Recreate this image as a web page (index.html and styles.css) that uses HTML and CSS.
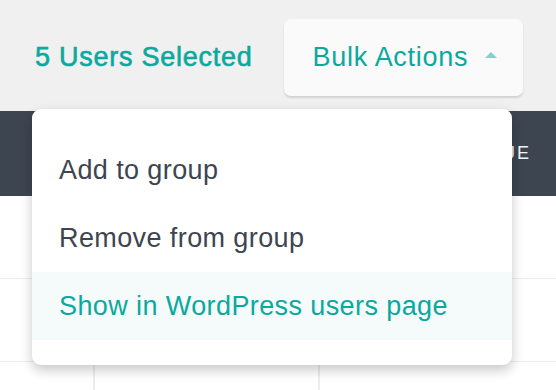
FILE: index.html
```html
<!DOCTYPE html>
<html>
<head>
<meta charset="utf-8">
<link rel="stylesheet" href="styles.css">
</head>
<body>
<div class="page">
  <div class="toolbar">
    <span class="count">5 Users Selected</span>
    <button class="bulk">
      <span>Bulk Actions</span>
      <svg class="caret" width="12" height="6" viewBox="0 0 12 6"><path d="M0 6 L6 0 L12 6 Z" fill="#80d3cd"/></svg>
    </button>
  </div>
  <div class="table">
    <div class="thead">
      <span class="th">VALUE</span>
    </div>
    <div class="row"></div>
    <div class="row"></div>
    <div class="row last">
      <div class="cell c1"></div>
      <div class="cell c2"></div>
      <div class="cell c3"></div>
    </div>
  </div>
  <ul class="menu">
    <li class="item">Add to group</li>
    <li class="item">Remove from group</li>
    <li class="item active">Show in WordPress users page</li>
  </ul>
</div>
</body>
</html>
```

FILE: styles.css
```css
html, body {
  margin: 0;
  padding: 0;
  background: #ffffff;
}
body {
  width: 556px;
  height: 390px;
  overflow: hidden;
  font-family: "Liberation Sans", Arial, sans-serif;
}
.page {
  position: relative;
  width: 556px;
  height: 390px;
  overflow: hidden;
}
.toolbar {
  height: 111px;
  box-sizing: border-box;
  background: #f0f0f0;
  display: flex;
  align-items: flex-start;
  padding: 19px 0 0 35px;
  gap: 31px;
}
.count {
  color: #0aa99f;
  font-size: 27px;
  font-weight: normal;
  line-height: 77px;
  letter-spacing: 0.75px;
  -webkit-text-stroke: 0.6px #0aa99f;
}
.bulk {
  display: flex;
  align-items: center;
  height: 77px;
  width: 239px;
  box-sizing: border-box;
  padding: 0 26px 0 29px;
  border: none;
  border-radius: 7px;
  background: #fafafa;
  box-shadow: 0 2px 2px rgba(0,0,0,0.12);
  font-family: inherit;
  font-size: 27px;
  letter-spacing: 0.7px;
  color: #0aa99f;
  justify-content: space-between;
}
.caret {
  display: block;
  margin-top: -6px;
}
.table {
  display: flex;
  flex-direction: column;
}
.thead {
  height: 85px;
  background: #3d4551;
  display: flex;
  align-items: center;
  justify-content: flex-end;
  padding-right: 25px;
}
.th {
  color: #f2f3f4;
  font-size: 18px;
  letter-spacing: 2px;
}
.row {
  height: 82px;
  border-bottom: 1px solid #ececec;
}
.last {
  display: flex;
  height: 28px;
  border-bottom: none;
}
.cell {
  border-right: 2px solid #ececec;
}
.c1 { width: 93px; }
.c2 { width: 223px; }
.c3 { flex: 1; border-right: none; }
.menu {
  position: absolute;
  top: 109px;
  left: 32px;
  width: 480px;
  margin: 0;
  padding: 27px 0 25px;
  list-style: none;
  background: #ffffff;
  border-radius: 9px;
  box-shadow: 0 5px 12px rgba(0,0,0,0.22);
}
.item {
  height: 68px;
  display: flex;
  align-items: center;
  padding-left: 27px;
  font-size: 27px;
  letter-spacing: 0.4px;
  color: #3d4551;
}
.item.active {
  background: #f5fbfb;
  color: #0aa99f;
}
```
